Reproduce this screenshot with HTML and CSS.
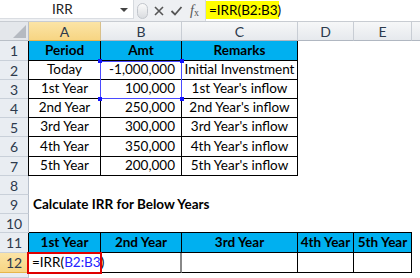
FILE: index.html
```html
<!DOCTYPE html>
<html>
<head>
<meta charset="utf-8">
<link rel="stylesheet" href="styles.css">
</head>
<body>
<div class="app">
  <div class="fbar">
    <div class="namebox"><span class="nb-text">IRR</span><span class="nb-arrow"></span></div>
    <div class="fbtns">
      <span class="grip"></span>
      <svg class="ico" width="12" height="12" viewBox="0 0 12 12"><path d="M2 2 L10 10 M10 2 L2 10" stroke="#555" stroke-width="1.6" fill="none"/></svg>
      <svg class="ico" width="13" height="12" viewBox="0 0 13 12"><path d="M1.5 6 L5 9.5 L11.5 2" stroke="#555" stroke-width="1.8" fill="none"/></svg>
      <span class="fx"><i>f</i><sub>x</sub></span>
    </div>
    <div class="fbox"><span class="fhl">=IRR(B2:B3)</span></div>
  </div>
  <div class="sheet">
    <div class="corner"></div>
    <div class="ch active">A</div>
    <div class="ch">B</div>
    <div class="ch">C</div>
    <div class="ch">D</div>
    <div class="ch">E</div>
    <div class="ch last"></div>

    <div class="rh">1</div>
    <div class="c hd bl">Period</div>
    <div class="c hd">Amt</div>
    <div class="c hd">Remarks</div>
    <div class="c"></div><div class="c"></div><div class="c"></div>

    <div class="rh">2</div>
    <div class="c b bl ctr">Today</div>
    <div class="c b num">-1,000,000</div>
    <div class="c b ctr">Initial Invenstment</div>
    <div class="c"></div><div class="c"></div><div class="c"></div>

    <div class="rh">3</div>
    <div class="c b bl ctr">1st Year</div>
    <div class="c b num">100,000</div>
    <div class="c b ctr">1st Year's inflow</div>
    <div class="c"></div><div class="c"></div><div class="c"></div>

    <div class="rh">4</div>
    <div class="c b bl ctr">2nd Year</div>
    <div class="c b num">250,000</div>
    <div class="c b ctr">2nd Year's inflow</div>
    <div class="c"></div><div class="c"></div><div class="c"></div>

    <div class="rh">5</div>
    <div class="c b bl ctr">3rd Year</div>
    <div class="c b num">300,000</div>
    <div class="c b ctr">3rd Year's inflow</div>
    <div class="c"></div><div class="c"></div><div class="c"></div>

    <div class="rh">6</div>
    <div class="c b bl ctr">4th Year</div>
    <div class="c b num">350,000</div>
    <div class="c b ctr">4th Year's inflow</div>
    <div class="c"></div><div class="c"></div><div class="c"></div>

    <div class="rh">7</div>
    <div class="c b bl ctr">5th Year</div>
    <div class="c b num">200,000</div>
    <div class="c b ctr">5th Year's inflow</div>
    <div class="c"></div><div class="c"></div><div class="c"></div>

    <div class="rh">8</div>
    <div class="c span"></div>

    <div class="rh">9</div>
    <div class="c span title">Calculate IRR for Below Years</div>

    <div class="rh">10</div>
    <div class="c tb"></div><div class="c tb"></div><div class="c tb"></div><div class="c tb"></div><div class="c tb"></div><div class="c"></div>

    <div class="rh">11</div>
    <div class="c hd bl">1st Year</div>
    <div class="c hd">2nd Year</div>
    <div class="c hd">3rd Year</div>
    <div class="c hd">4th Year</div>
    <div class="c hd">5th Year</div>
    <div class="c"></div>

    <div class="rh active">12</div>
    <div class="c b bl formula">=IRR(<span class="ref">B2:B3</span>)</div>
    <div class="c b gr"></div>
    <div class="c b"></div>
    <div class="c b"></div>
    <div class="c b"></div>
    <div class="c"></div>

    <div class="rh"></div>
    <div class="c span"></div>

    <div class="refbox"><i class="h tl"></i><i class="h tr"></i><i class="h bl2"></i><i class="h br"></i></div>
  </div>
</div>
</body>
</html>
```
FILE: styles.css
```css
* { box-sizing: border-box; }
html, body { margin: 0; padding: 0; background: #fff; }
body { font-family: Lato, "Liberation Sans", sans-serif; font-size: 13.5px; color: #000; width: 420px; height: 278px; overflow: hidden; }
.app { width: 420px; height: 278px; overflow: hidden; }

.fbar { height: 22px; display: flex; background: #eef0f3; border-bottom: 1px solid #c8ccd2; }
.namebox { width: 134px; height: 19px; background: #fff; border-right: 1px solid #d5d9de; border-bottom: 1px solid #dadde2; position: relative; display: flex; align-items: center; }
.nb-text { margin-left: 52px; font-size: 13.5px; color: #222; }
.nb-arrow { position: absolute; right: 5px; top: 8px; border-left: 4px solid transparent; border-right: 4px solid transparent; border-top: 4px solid #444; }
.fbtns { width: 71px; display: flex; align-items: center; gap: 5px; padding-left: 3px; }
.grip { width: 11px; height: 16px; border-radius: 8px; background: linear-gradient(#fafafa, #d9dce0); border: 1px solid #c2c6cc; }
.ico { display: block; }
.fx { font-family: "Liberation Serif", serif; font-size: 14px; color: #555; margin-left: 2px; }
.fx sub { font-size: 10px; vertical-align: -1px; }
.fbox { flex: 1; background: #fff; height: 21px; padding: 1px 0 0 0; border-left: 1px solid #d5d9de; }
.fhl { display: inline-block; background: #ffff00; height: 18px; line-height: 18px; padding: 0 4px 0 3px; font-size: 13.5px; width: 73px; }

.sheet { position: relative; display: grid; grid-template-columns: 29px 72px 81px 116px 56px 58px 1fr; grid-template-rows: 19px 20px 19px 19px 19px 19px 20px 19px 19px 19px 19px 20px 20px 1fr; height: 256px; }
.corner { background: #e4e7eb; border-right: 1px solid #b9bfc7; border-bottom: 1px solid #b9bfc7; position: relative; }
.corner::after { content: ""; position: absolute; right: 2px; bottom: 2px; border-left: 13px solid transparent; border-bottom: 13px solid #b5bac1; }
.ch { background: linear-gradient(#f6f7f8, #e6e9ed); border-right: 1px solid #c8cdd4; border-bottom: 1px solid #b0b7c1; display: flex; align-items: center; justify-content: center; color: #2d3a4c; font-size: 14px; }
.ch.active { background: linear-gradient(#fbe4a6, #f7d583); border-bottom-color: #e7b54b; border-right-color: #d9c08a; }
.ch.last { border-right: none; }
.rh { background: #e9edf2; border-right: 1px solid #b7bfca; border-bottom: 1px solid #c9d0d9; display: flex; align-items: center; justify-content: center; color: #2d3a4c; font-size: 14px; }
.rh.active { background: linear-gradient(#fbe4a6, #f7d583); border-bottom-color: #e7b54b; }

.c { white-space: nowrap; display: flex; align-items: flex-end; padding: 0 3px 1px; line-height: 17px; }
.span { grid-column: 2 / 8; }
.title { font-weight: bold; padding-left: 4px; }
.hd { background: #00b0f0; font-weight: bold; justify-content: center; border-right: 1px solid #000; border-bottom: 1px solid #000; }
.b { border-right: 1px solid #000; border-bottom: 1px solid #000; }
.bl { border-left: 1px solid #000; margin-left: -1px; }
.tb { border-bottom: 1px solid #000; }
.ctr { justify-content: center; }
.num { justify-content: flex-end; padding-right: 6px; }
.gr { border-right: 2px solid #888; }
.formula { overflow: visible; outline: 2px solid #e00000; outline-offset: -1px; padding-left: 3px; position: relative; z-index: 2; }
.ref { color: #2323ff; }

.refbox { position: absolute; left: 100px; top: 39px; width: 82px; height: 38px; border: 1px solid #4a4aff; pointer-events: none; }
.h { position: absolute; width: 4px; height: 4px; background: #1212ff; }
.tl { left: -3px; top: -3px; }
.tr { right: -3px; top: -3px; }
.bl2 { left: -3px; bottom: -3px; }
.br { right: -3px; bottom: -3px; }
```
